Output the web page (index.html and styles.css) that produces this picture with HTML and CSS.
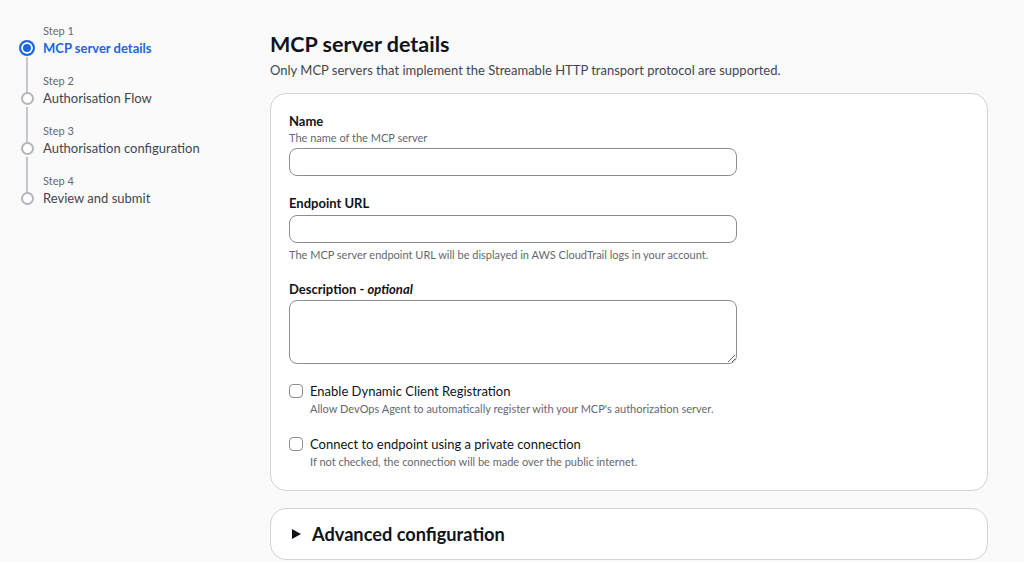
FILE: index.html
```html
<!DOCTYPE html>
<html lang="en">
<head>
<meta charset="utf-8">
<title>MCP server details</title>
<link rel="stylesheet" href="styles.css">
</head>
<body>
<div class="page">
  <nav class="steps">
    <ol class="step-list">
      <li class="step active">
        <div class="step-num">Step 1</div>
        <div class="step-row"><span class="dot-wrap"><span class="dot"></span></span><span class="step-name">MCP server details</span></div>
      </li>
      <li class="step">
        <div class="step-num">Step 2</div>
        <div class="step-row"><span class="dot-wrap"><span class="dot"></span></span><span class="step-name">Authorisation Flow</span></div>
      </li>
      <li class="step">
        <div class="step-num">Step 3</div>
        <div class="step-row"><span class="dot-wrap"><span class="dot"></span></span><span class="step-name">Authorisation configuration</span></div>
      </li>
      <li class="step last">
        <div class="step-num">Step 4</div>
        <div class="step-row"><span class="dot-wrap"><span class="dot"></span></span><span class="step-name">Review and submit</span></div>
      </li>
    </ol>
  </nav>
  <main class="main">
    <h1 class="title">MCP server details</h1>
    <p class="subtitle">Only MCP servers that implement the Streamable HTTP transport protocol are supported.</p>
    <section class="card form-card">
      <div class="field first">
        <label class="label">Name</label>
        <div class="desc">The name of the MCP server</div>
        <input class="input" type="text">
      </div>
      <div class="field">
        <label class="label">Endpoint URL</label>
        <input class="input" type="text">
        <div class="hint">The MCP server endpoint URL will be displayed in AWS CloudTrail logs in your account.</div>
      </div>
      <div class="field">
        <label class="label">Description - <i>optional</i></label>
        <textarea class="textarea"></textarea>
      </div>
      <div class="check">
        <span class="box"></span>
        <div class="check-text">
          <div class="check-label">Enable Dynamic Client Registration</div>
          <div class="check-desc">Allow DevOps Agent to automatically register with your MCP's authorization server.</div>
        </div>
      </div>
      <div class="check">
        <span class="box"></span>
        <div class="check-text">
          <div class="check-label">Connect to endpoint using a private connection</div>
          <div class="check-desc">If not checked, the connection will be made over the public internet.</div>
        </div>
      </div>
    </section>
    <section class="card expand-card">
      <svg class="caret" width="9" height="10" viewBox="0 0 9 10"><path d="M0 0 L9 5 L0 10 Z" fill="#0f141a"/></svg>
      <span class="expand-title">Advanced configuration</span>
    </section>
  </main>
</div>
</body>
</html>
```
FILE: styles.css
```css
* { box-sizing: border-box; }
html, body { margin: 0; padding: 0; }
body {
  background: #fafafa;
  font-family: "Lato", "Liberation Sans", Arial, sans-serif;
  color: #0f141a;
  font-size: 13px;
  overflow: hidden;
}
.page {
  display: flex;
  padding: 22px 36px 0 19px;
}
.steps { width: 251px; flex: none; }
.step-list { list-style: none; margin: 0; padding: 0; }
.step {
  position: relative;
  height: 50px;
}
.step::before {
  content: "";
  position: absolute;
  left: 7px;
  top: 35px;
  width: 2px;
  height: 40px;
  background: #c6c6cd;
}
.step.last::before { display: none; }
.step-num {
  padding-left: 24px;
  font-size: 11px;
  line-height: 17px;
  color: #656871;
}
.step-row {
  display: flex;
  align-items: center;
  gap: 8px;
  height: 18px;
}
.dot-wrap {
  width: 16px;
  height: 16px;
  display: flex;
  align-items: center;
  justify-content: center;
  flex: none;
}
.dot {
  width: 13px;
  height: 13px;
  border-radius: 50%;
  border: 2px solid #b4b4bb;
  background: #fff;
}
.step.active .dot {
  width: 16px;
  height: 16px;
  border-color: #1b66e0;
  background: #1b66e0;
  box-shadow: inset 0 0 0 2px #fff;
}
.step-name {
  font-size: 13px;
  color: #424650;
}
.step.active .step-name {
  color: #1b66e0;
  font-weight: 700;
}
.main {
  flex: 1;
  padding-top: 9px;
}
.title {
  margin: 0;
  font-size: 21.5px;
  line-height: 26px;
  font-weight: 700;
  color: #0f141a;
}
.subtitle {
  margin: 3px 0 13px;
  font-size: 13px;
  line-height: 20px;
  color: #424650;
}
.card {
  background: #fff;
  border: 1px solid #d3d3d8;
  border-radius: 16px;
}
.form-card {
  padding: 18px 18px 20px;
}
.field { margin-bottom: 17px; }
.field.first { margin-bottom: 18px; }
.label {
  display: block;
  font-weight: 700;
  font-size: 13px;
  line-height: 18px;
}
.label i { font-weight: 700; }
.desc {
  font-size: 11px;
  line-height: 16px;
  color: #656871;
  margin-bottom: 2px;
}
.field .label + .input { margin-top: 3px; }
.field .label + .textarea { margin-top: 2px; }
.input {
  display: block;
  width: 448px;
  height: 28px;
  border: 1px solid #8c8c94;
  border-radius: 8px;
  background: #fff;
  font: inherit;
}
.hint {
  font-size: 11px;
  line-height: 16px;
  color: #656871;
  margin-top: 4px;
}
.textarea {
  display: block;
  width: 448px;
  height: 64px;
  border: 1px solid #8c8c94;
  border-radius: 8px;
  background: #fff;
  font: inherit;
  resize: vertical;
}
.check {
  display: flex;
  gap: 7px;
  margin-top: 17px;
}
.check + .check { margin-top: 17px; }
.box {
  width: 14px;
  height: 14px;
  border: 1px solid #8c8c94;
  border-radius: 4px;
  margin-top: 3px;
  flex: none;
  background: #fff;
}
.check-label {
  font-size: 13px;
  line-height: 20px;
}
.check-desc {
  font-size: 11px;
  line-height: 16px;
  color: #656871;
}
.expand-card {
  margin-top: 17px;
  height: 52px;
  display: flex;
  align-items: center;
  padding-left: 21px;
  gap: 11px;
}
.expand-title {
  font-size: 18.2px;
  font-weight: 700;
}
```
